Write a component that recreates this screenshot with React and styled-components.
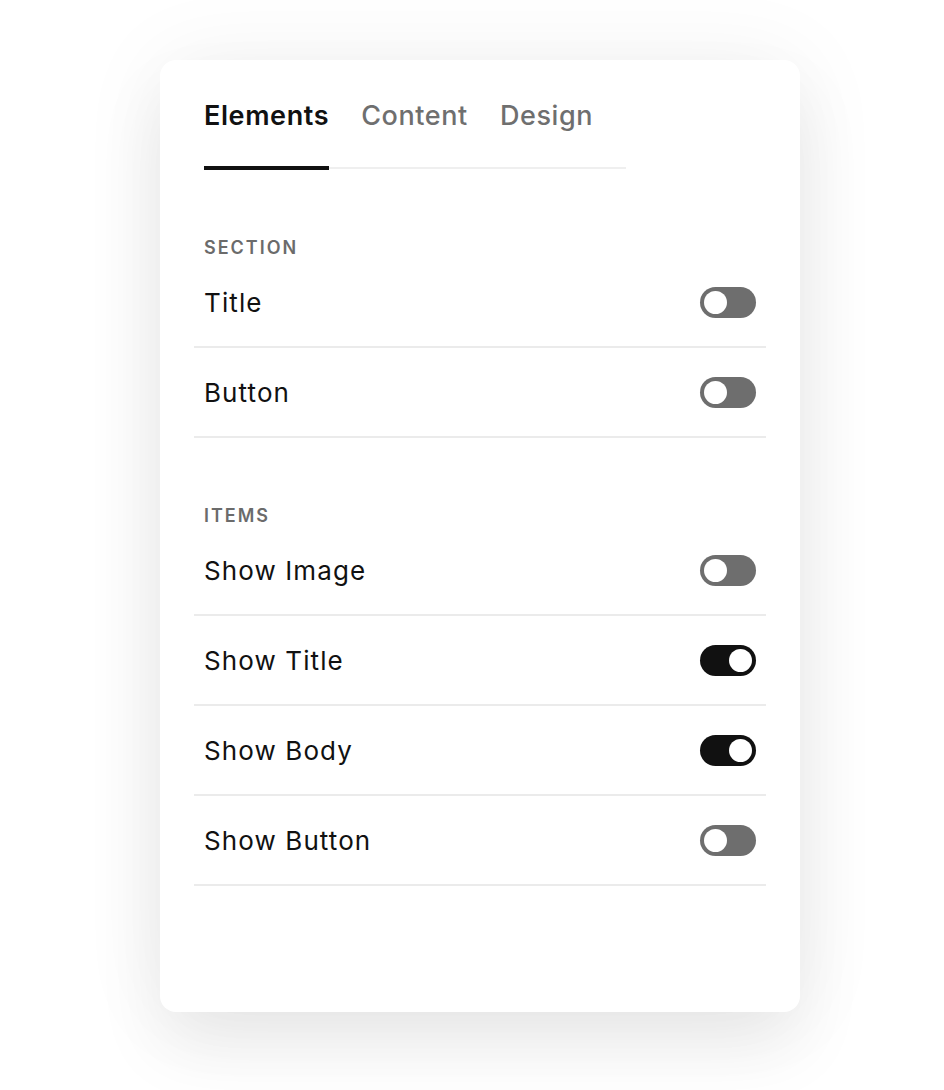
import React from 'react';
import styled, { createGlobalStyle } from 'styled-components';

const GlobalStyle = createGlobalStyle`
  body {
    margin: 0;
    background: #ffffff;
    font-family: Inter, "Noto Sans", sans-serif;
    -webkit-font-smoothing: antialiased;
  }
`;

const Page = styled.div`
  min-height: 1090px;
  display: flex;
  justify-content: center;
  padding: 60px 0 0 16px;
  box-sizing: border-box;
  overflow: hidden;
`;

const Card = styled.div`
  width: 640px;
  height: 952px;
  box-sizing: border-box;
  padding: 40px 34px 0;
  background: #fff;
  border-radius: 16px;
  box-shadow: 0 0 90px rgba(0, 0, 0, 0.06), 0 36px 70px rgba(0, 0, 0, 0.07);
`;

const TabBar = styled.div`
  display: flex;
  gap: 32px;
  width: 422px;
  margin-left: 10px;
  background: linear-gradient(#efefef, #efefef) no-repeat 0 calc(100% - 1px) / 100% 2px;
`;

const Tab = styled.div`
  font-size: 27px;
  line-height: 32px;
  letter-spacing: 0.6px;
  font-weight: ${p => (p.$active ? 600 : 500)};
  color: ${p => (p.$active ? '#111' : '#6f6f6f')};
  padding-bottom: 34px;
  border-bottom: 4px solid ${p => (p.$active ? '#111' : 'transparent')};
`;

const Section = styled.section`
  margin-top: 68px;
`;

const Label = styled.div`
  padding-left: 10px;
  font-size: 18px;
  line-height: 20px;
  font-weight: 600;
  letter-spacing: 2px;
  text-transform: uppercase;
  color: #6b6b6b;
`;

const Row = styled.div`
  height: 88px;
  display: flex;
  align-items: center;
  justify-content: space-between;
  padding: 0 10px;
  border-bottom: 2px solid #ebebeb;
  font-size: 26px;
  letter-spacing: 1.1px;
  color: #111;
`;

const Switch = styled.span`
  width: 56px;
  height: 31px;
  border-radius: 16px;
  background: ${p => (p.$on ? '#111' : '#6e6e6e')};
  display: flex;
  align-items: center;
  justify-content: ${p => (p.$on ? 'flex-end' : 'flex-start')};
  padding: 0 4px;
  box-sizing: border-box;

  &::after {
    content: '';
    width: 23px;
    height: 23px;
    border-radius: 50%;
    background: #fff;
  }
`;

const sections = [
  {
    label: 'Section',
    rows: [
      { name: 'Title', on: false },
      { name: 'Button', on: false },
    ],
  },
  {
    label: 'Items',
    rows: [
      { name: 'Show Image', on: false },
      { name: 'Show Title', on: true },
      { name: 'Show Body', on: true },
      { name: 'Show Button', on: false },
    ],
  },
];

export default function App() {
  return (
    <Page>
      <GlobalStyle />
      <Card>
        <TabBar>
          <Tab $active>Elements</Tab>
          <Tab>Content</Tab>
          <Tab>Design</Tab>
        </TabBar>
        {sections.map(s => (
          <Section key={s.label}>
            <Label>{s.label}</Label>
            {s.rows.map(r => (
              <Row key={r.name}>
                {r.name}
                <Switch $on={r.on} />
              </Row>
            ))}
          </Section>
        ))}
      </Card>
    </Page>
  );
}
